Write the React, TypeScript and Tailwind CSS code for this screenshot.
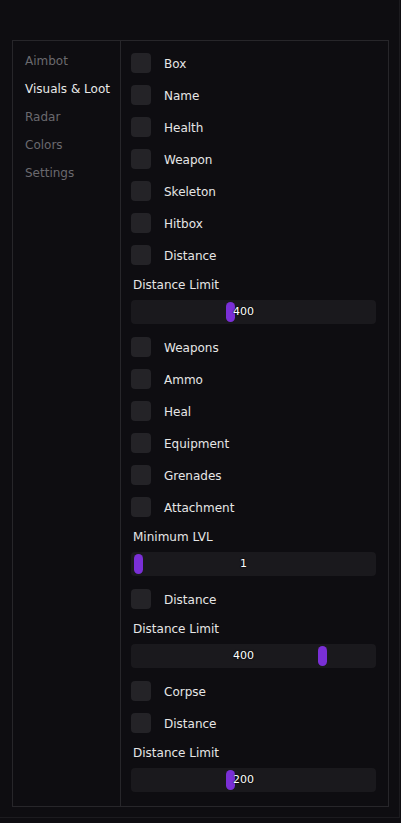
import React from "react";

const font = { fontFamily: '"DejaVu Sans", "Liberation Sans", sans-serif' };

const tabs = ["Aimbot", "Visuals & Loot", "Radar", "Colors", "Settings"];

function Check({ label }: { label: string }) {
  return (
    <div className="flex h-8 items-center">
      <div className="h-5 w-5 rounded-[4px] bg-[#242327]" />
      <span className="ml-[13px] pt-[2px] text-[12px] text-[#e6e6e6]">{label}</span>
    </div>
  );
}

function Slider({ label, value, pct }: { label: string; value: string; pct: number }) {
  return (
    <div className="mb-[7px]">
      <div className="flex h-[25px] items-center pt-[2px] pl-0.5 text-[12px] text-[#e6e6e6]">{label}</div>
      <div className="relative mt-1 h-6 w-[245px] rounded-[4px] bg-[#1a191d]">
        <div
          className="absolute top-[2px] h-5 w-[9px] rounded-full bg-[#7a2fd6]"
          style={{ left: `calc(3px + ${pct} * (100% - 15px))` }}
        />
        <div className="absolute inset-y-0 left-0 right-[20px] flex items-center justify-center pt-[1px] text-[11px] text-white [text-shadow:0_0_2px_#000,0_0_1px_#000]">
          {value}
        </div>
      </div>
    </div>
  );
}

export default function App() {
  return (
    <div style={font} className="min-h-[823px] w-[401px] bg-[#0e0d11]">
      <div className="h-[818px] w-[400px] border-r border-b border-[#1c1b1f] pt-10 pl-3">
        <div className="flex h-[767px] w-[377px] border border-[#27262a]">
          <div className="w-[108px] border-r border-[#27262a] pt-[5px] pl-3">
            {tabs.map((t) => (
              <div
                key={t}
                className={
                  "flex h-7 items-center pt-[2px] text-[12px] " +
                  (t === "Visuals & Loot" ? "text-[#e8e8e8]" : "text-[#6a696e]")
                }
              >
                {t}
              </div>
            ))}
          </div>
          <div className="flex-1 pt-1.5 pl-2.5">
            <Check label="Box" />
            <Check label="Name" />
            <Check label="Health" />
            <Check label="Weapon" />
            <Check label="Skeleton" />
            <Check label="Hitbox" />
            <Check label="Distance" />
            <Slider label="Distance Limit" value="400" pct={0.4} />
            <Check label="Weapons" />
            <Check label="Ammo" />
            <Check label="Heal" />
            <Check label="Equipment" />
            <Check label="Grenades" />
            <Check label="Attachment" />
            <Slider label="Minimum LVL" value="1" pct={0} />
            <Check label="Distance" />
            <Slider label="Distance Limit" value="400" pct={0.8} />
            <Check label="Corpse" />
            <Check label="Distance" />
            <Slider label="Distance Limit" value="200" pct={0.4} />
          </div>
        </div>
      </div>
    </div>
  );
}
